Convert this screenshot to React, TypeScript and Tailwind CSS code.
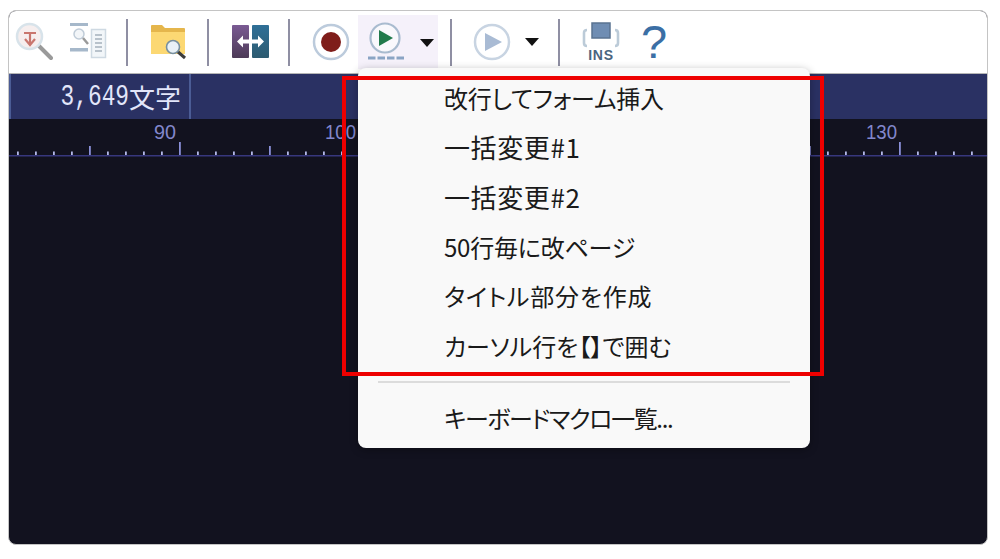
import React from 'react';

const menuFont = "[font-family:'Noto_Sans_CJK_JP',sans-serif] [font-feature-settings:'palt']";

const Sep = ({ ml }: { ml: string }) => <div className={`${ml} h-[47px] w-[2px] shrink-0 bg-[#8f8fa3]`} />;

const DropArrow = () => (
  <svg width="18" height="10" viewBox="0 0 18 10"><path d="M2 1h14l-7 8z" fill="#111" /></svg>
);

const menuItems = [
  { label: '改行してフォーム挿入', cls: 'text-[24px] tracking-[-0.2px]' },
  { label: '一括変更#1', cls: 'text-[26px] tracking-[0.6px]' },
  { label: '一括変更#2', cls: 'text-[26px] tracking-[0.6px]' },
  { label: '50行毎に改ページ', cls: 'text-[24px] tracking-[-0.2px]' },
  { label: 'タイトル部分を作成', cls: 'text-[24px] tracking-[0.8px]' },
  { label: 'カーソル行を【】で囲む', cls: 'text-[24px]' },
];

const ticks = Array.from({ length: 55 }, (_, i) => i);

const Ruler = () => (
  <svg width="978" height="40" viewBox="0 0 978 40" className="block">
    <rect x="0" y="36" width="978" height="1.5" fill="#37377d" />
    {ticks.map(i => {
      const x = 8 + i * 18;
      const unit = i - 9;
      let top = 32.5;
      if (unit % 10 === 0) top = 23;
      else if (unit % 5 === 0) top = 27;
      return <rect key={i} x={x} y={top} width="1.8" height={36 - top} fill={unit % 5 === 0 ? '#8a90d8' : '#b4b8e8'} />;
    })}
    {[
      { n: 90, x: 167, w: 22 },
      { n: 100, x: 347, w: 31 },
      { n: 130, x: 888, w: 31 },
    ].map(({ n, x, w }) => (
      <text key={n} x={x} y="20" textAnchor="end" textLength={w} lengthAdjust="spacingAndGlyphs" fontFamily="'Liberation Sans', sans-serif" fontSize="20" fill="#8287cc">{n}</text>
    ))}
  </svg>
);

export default function App() {
  return (
    <div className="relative h-[559px] w-[1000px] overflow-hidden bg-white pl-[8px] pt-[10px]">
      <div className="flex h-[535px] w-[980px] flex-col overflow-hidden rounded-[8px] border border-[#c4c4c4] bg-[#12121f]">
        {/* toolbar */}
        <div className="flex h-[63px] shrink-0 items-center border-b border-[#b5b5b5] bg-white">
          <svg className="ml-[6px] shrink-0" width="38" height="42" viewBox="0 0 38 42">
            <path d="M24 25l12 12" stroke="#9a9a9a" strokeWidth="4" strokeLinecap="round" />
            <circle cx="14.5" cy="15.5" r="12.5" fill="#f6eeee" stroke="#d8e3ea" strokeWidth="2.5" />
            <path d="M9 12h12M15 12v11M10 18l5 6 5-6" fill="none" stroke="#c9766e" strokeWidth="2.2" />
          </svg>
          <svg className="ml-[16px] shrink-0" width="38" height="40" viewBox="0 0 38 40">
            <rect x="1" y="1" width="18" height="3" fill="#a6b8ca" />
            <rect x="1" y="26" width="18" height="3.5" fill="#a6b8ca" />
            <circle cx="10" cy="12" r="5" fill="#f2f5f8" stroke="#c0ccd8" strokeWidth="1.5" />
            <path d="M14 16l5 6" stroke="#9a9a9a" strokeWidth="2.5" />
            <rect x="22.5" y="7.5" width="14" height="28" fill="#f2f6f9" stroke="#ced9e2" strokeWidth="1.5" />
            <path d="M26 13h7M26 17h7M26 21h7M26 25h7M26 29h7" stroke="#a5b1bc" strokeWidth="1.6" />
          </svg>
          <Sep ml="ml-[19px]" />
          <svg className="ml-[22px] shrink-0" width="38" height="38" viewBox="0 0 38 38">
            <path d="M1 3a1 1 0 0 1 1-1h10l3 3h19a1 1 0 0 1 1 1v5H1z" fill="#e5b64c" />
            <rect x="1" y="9" width="34" height="22" fill="#fcd873" />
            <path d="M27 28l8 7" stroke="#3c3c3c" strokeWidth="3" />
            <circle cx="23" cy="24" r="6.5" fill="#e9f1f7" stroke="#78909f" strokeWidth="1.6" />
          </svg>
          <Sep ml="ml-[19px]" />
          <svg className="ml-[23px] shrink-0" width="37" height="34" viewBox="0 0 37 34">
            <defs>
              <linearGradient id="pl" x1="0" y1="0" x2="0" y2="1"><stop offset="0" stopColor="#7a5a93" /><stop offset="1" stopColor="#4d3b57" /></linearGradient>
              <linearGradient id="pr" x1="0" y1="0" x2="0" y2="1"><stop offset="0" stopColor="#2f6f97" /><stop offset="1" stopColor="#2d5b70" /></linearGradient>
            </defs>
            <rect x="0" y="0" width="17" height="33" rx="1" fill="url(#pl)" />
            <rect x="20" y="0" width="17" height="33" rx="1" fill="url(#pr)" />
            <path d="M5 16.5l6-6v4h15v-4l6 6-6 6v-4H11v4z" fill="#fff" />
          </svg>
          <Sep ml="ml-[19px]" />
          <svg className="ml-[22px] shrink-0" width="38" height="38" viewBox="0 0 38 38">
            <circle cx="19" cy="19" r="17" fill="#fff" stroke="#bccbdc" strokeWidth="2.5" />
            <circle cx="19" cy="19" r="10" fill="#7f1d1a" />
          </svg>
          {/* hovered macro button */}
          <div className="ml-[8px] flex h-[54px] w-[80px] shrink-0 items-center bg-[#f5f1fa]">
            <svg className="ml-[10px] shrink-0" width="38" height="40" viewBox="0 0 38 40">
              <circle cx="17" cy="16" r="14.5" fill="#f9f8fc" stroke="#a9bbcf" strokeWidth="2.2" />
              <path d="M11 8l14 8-14 8z" fill="#217a4b" />
              <path d="M0 36h7.5M9.5 36h7.5M19 36h7.5M28.5 36h7.5" stroke="#8aa4c4" strokeWidth="3" />
            </svg>
            <div className="ml-[12px] flex shrink-0 pt-[2px]"><DropArrow /></div>
          </div>
          <Sep ml="ml-[12px]" />
          <svg className="ml-[21px] shrink-0" width="38" height="38" viewBox="0 0 38 38">
            <circle cx="19" cy="19" r="17" fill="#fff" stroke="#c8d4e2" strokeWidth="2.5" />
            <path d="M12 10l17 9-17 9z" fill="#a9bbd4" />
          </svg>
          <div className="ml-[12px] flex shrink-0"><DropArrow /></div>
          <Sep ml="ml-[17px]" />
          <div className="relative ml-[22px] h-[40px] w-[38px] shrink-0">
            <svg className="block" width="38" height="40" viewBox="0 0 38 40">
              <rect x="10" y="1" width="18" height="15" fill="#6f8db3" stroke="#5a7391" strokeWidth="1.5" />
              <path d="M5 8Q2 8 2 11v10q0 3 3 3M33 8q3 0 3 3v10q0 3-3 3" fill="none" stroke="#bccbd8" strokeWidth="2.6" />
            </svg>
            <span className="absolute bottom-[-1px] left-0 w-full text-center text-[14px] leading-[15px] font-bold tracking-[0.8px] text-[#4a6580] [font-family:'Liberation_Sans',sans-serif]">INS</span>
          </div>
          <span className="ml-[20px] w-[28px] shrink-0 text-center text-[47px] leading-[46px] text-[#3b6fa5] [font-family:'Liberation_Sans',sans-serif]">?</span>
        </div>
        {/* status bar */}
        <div className="flex h-[45px] shrink-0 bg-[#2a3163]">
          <div className="flex w-[182px] items-center justify-end border-x-2 border-x-[#4b5c95] pr-[8px] text-[#e2e6fa]">
            <span className="origin-right scale-x-[0.76] text-[30px] leading-none [font-family:'Liberation_Mono',monospace]">3,649</span>
            <span className="text-[26px] leading-none [font-family:'Noto_Sans_CJK_JP',sans-serif]">文字</span>
          </div>
        </div>
        {/* ruler */}
        <Ruler />
      </div>

      {/* dropdown */}
      <div className={`absolute left-[358px] top-[68px] w-[452px] rounded-[8px] bg-[#f9f9f9] pb-[5px] pt-[5px] shadow-[0_2px_8px_rgba(0,0,0,0.3)] ${menuFont}`}>
        {menuItems.map(item => (
          <div key={item.label} className={`flex h-[49.6px] items-center pl-[86px] leading-none text-[#1a1a1a] ${item.cls}`}>{item.label}</div>
        ))}
        <div className="mx-[20px] mt-[10px] h-[2px] bg-[#dcdcdc]" />
        <div className="mt-[10px] flex h-[50px] items-center pl-[86px] text-[24px] leading-none tracking-[-1.4px] text-[#1a1a1a]">キーボードマクロ一覧...</div>
      </div>

      {/* red highlight */}
      <div className="absolute left-[342px] top-[76px] h-[300px] w-[482px] border-[4px] border-[#ee0000]" />
    </div>
  );
}
